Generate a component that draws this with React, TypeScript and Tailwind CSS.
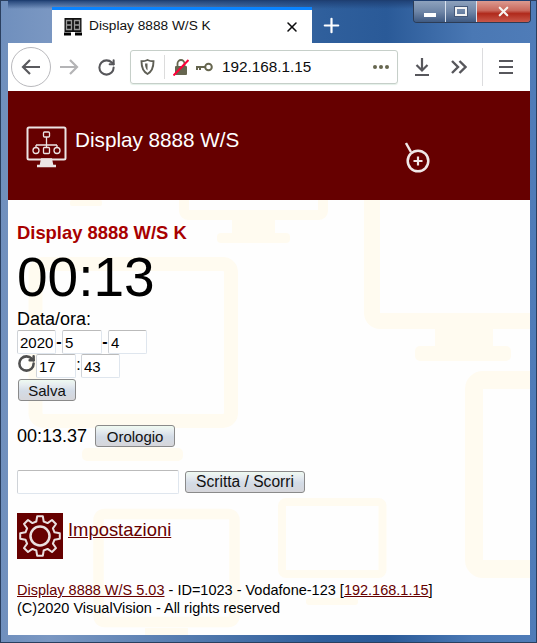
import { Plus, RotateCw, X } from "lucide-react";

const font = "font-['Liberation_Sans',Arial,sans-serif]";

function gearPath() {
  const teeth = 8;
  const c = 23;
  const pts: string[] = [];
  for (let i = 0; i < teeth; i++) {
    const a = (i * Math.PI * 2) / teeth - Math.PI / 2;
    const step = (Math.PI * 2) / teeth;
    const list: [number, number][] = [
      [15, a - step * 0.32],
      [20, a - step * 0.18],
      [20, a + step * 0.18],
      [15, a + step * 0.32],
    ];
    for (const [r, t] of list) {
      pts.push(`${(c + r * Math.cos(t)).toFixed(1)} ${(c + r * Math.sin(t)).toFixed(1)}`);
    }
  }
  return `M${pts.join(" L")} Z`;
}

function Watermark() {
  const c = "#fffbf0";
  return (
    <svg className="absolute left-0 top-0" width="522" height="436" viewBox="8 200 522 436" fill="none">
      <rect x="70" y="200" width="32" height="6" rx="2" fill={c} />
      {/* monitor under the header, left */}
      <rect x="184" y="180" width="139" height="35" rx="4" stroke={c} strokeWidth="10" />
      <rect x="232" y="220" width="43" height="14" fill={c} />
      <rect x="217" y="233" width="73" height="10" rx="4" fill={c} />
      {/* big monitor behind the form */}
      <rect x="35.500" y="264" width="195.500" height="157" rx="8" stroke={c} strokeWidth="14" />
      <rect x="115" y="428" width="45" height="22" fill={c} />
      <rect x="82" y="448" width="101" height="13" rx="5" fill={c} />
      {/* monitor right, top */}
      <rect x="372" y="150" width="190" height="171" rx="8" stroke={c} strokeWidth="16" />
      <rect x="435" y="329" width="58" height="18" fill={c} />
      <rect x="415" y="346" width="96" height="15" rx="5" fill={c} />
      {/* monitor right, bottom */}
      <rect x="474" y="380" width="100" height="189" rx="9" stroke={c} strokeWidth="18" />
      {/* small monitors at the bottom */}
      <rect x="282" y="502" width="100.500" height="72" rx="4" stroke={c} strokeWidth="8" />
      <rect x="306" y="598" width="52" height="7" rx="3" fill={c} />
      <rect x="98.500" y="514" width="136" height="108" rx="6" stroke={c} strokeWidth="10.500" />
      <rect x="145" y="628" width="43" height="8" fill={c} />
    </svg>
  );
}

function Favicon() {
  const digit = (x: number) => (
    <path d={`M${x} 2.500h5v9h-5zM${x} 7h5`} fill="none" stroke="#9a9a9a" strokeWidth="1.300" />
  );
  return (
    <svg width="18" height="18" viewBox="0 0 18 18">
      <rect x="0.500" y="0" width="17" height="14" fill="#111" />
      {digit(2.500)}
      {digit(10.500)}
      <rect x="0" y="14.500" width="7" height="3" fill="#000" />
      <rect x="11" y="14.500" width="7" height="3" fill="#000" />
    </svg>
  );
}

function TabStrip() {
  return (
    <div className="-mr-[1px] flex h-[43px] bg-[linear-gradient(180deg,#1e3f73,#2f5a9400_9px)] pl-[44px]">
      <div className="mt-[7px] flex h-[36px] w-[260px] items-center border-t-[3px] border-[#0a84ff] bg-white pl-[12px] pr-[12px]">
        <Favicon />
        <span className="ml-[7px] text-[13.700px] text-[#111]">Display 8888 W/S K</span>
        <X className="ml-auto" size={16} strokeWidth={2.300} color="#0c0c0d" />
      </div>
      <Plus className="ml-[8px] mt-[14px]" size={23} strokeWidth={2.300} color="#fff" />
      <div className="ml-auto mt-[1px] flex h-[22px] w-[118px] overflow-hidden rounded-b-[4px] border border-t-0 border-[#2c3c55]">
        <div className="flex w-[32px] items-end justify-center border-r border-[#d9e2ee] bg-[linear-gradient(#8ea2bd,#6f86a7_50%,#3f5a82)] pb-[5px]">
          <div className="h-[4px] w-[12px] bg-white" />
        </div>
        <div className="flex w-[31px] items-center justify-center border-r border-[#d9e2ee] bg-[linear-gradient(#8ea2bd,#6f86a7_50%,#3f5a82)]">
          <div className="h-[9px] w-[12px] border-[2px] border-[#f2f2f2] outline outline-1 outline-[#45597a]" />
        </div>
        <div className="flex flex-1 items-center justify-center bg-[linear-gradient(#dc9a90,#c9685c_45%,#b02a1c_60%,#c8584a)]">
          <X size={15} strokeWidth={3.500} color="#f7f4f0" />
        </div>
      </div>
    </div>
  );
}

function Toolbar() {
  return (
    <div className="flex h-[48px] items-center bg-white pl-[3px] text-[#57575c]">
      <div className="flex h-[40px] w-[40px] items-center justify-center rounded-full border border-[#b9b9bd]">
        <svg width="20" height="18" viewBox="0 0 20 18" fill="none" stroke="#5a5a5e" strokeWidth="2.200">
          <path d="M19 9H2M9 2 2 9l7 7" />
        </svg>
      </div>
      <svg className="ml-[8px]" width="20" height="18" viewBox="0 0 20 18" fill="none" stroke="#b4b4b6" strokeWidth="2.200">
        <path d="M1 9h17M11 2l7 7-7 7" />
      </svg>
      <RotateCw className="ml-[18px]" size={19} strokeWidth={2.600} color="#56565a" />
      <div className="ml-[14px] flex h-[34px] w-[268px] items-center rounded-[3px] border border-[#c6cfc9] pl-[9px] pr-[8px] shadow-[0_1px_1px_#e3f0e8]">
        <svg width="15" height="16" viewBox="0 0 15 16" fill="none">
          <path d="M7.500 1C5.500 2 3 2.300 1.500 2.300c0 5.500 1 10 6 12.700 5-2.700 6-7.200 6-12.700C12 2.300 9.500 2 7.500 1Z" stroke="#5f5f55" strokeWidth="1.900" />
          <path d="M5 4.500h2.500v7C5.800 10 5 7.500 5 4.500Z" fill="#5f5f55" />
        </svg>
        <div className="ml-[9px] h-[24px] w-px bg-[#dcdcdc]" />
        <svg className="ml-[8px]" width="16" height="18" viewBox="0 0 16 18" fill="none">
          <path d="M4.500 8V5.500a3.500 3.500 0 0 1 7 0V8" stroke="#66664f" strokeWidth="1.800" />
          <rect x="2" y="8" width="12" height="9" rx="1" fill="#66664f" />
          <path d="M0.500 17.500 15.500 2" stroke="#ff0039" strokeWidth="2" />
        </svg>
        <svg className="ml-[6px]" width="18" height="10" viewBox="0 0 18 10" fill="none">
          <circle cx="13.500" cy="5" r="3.300" stroke="#66664f" strokeWidth="2" />
          <path d="M10 5H1M2 5v3M5 5v3" stroke="#66664f" strokeWidth="2" />
        </svg>
        <span className="ml-[9px] text-[15.300px] text-[#0c0c0d]">192.168.1.15</span>
        <div className="ml-auto flex gap-[2px]">
          <div className="h-[4px] w-[4px] rounded-full bg-[#66664f]" />
          <div className="h-[4px] w-[4px] rounded-full bg-[#66664f]" />
          <div className="h-[4px] w-[4px] rounded-full bg-[#66664f]" />
        </div>
      </div>
      <svg className="ml-[16px]" width="16" height="18" viewBox="0 0 16 18" fill="none" stroke="#57575c" strokeWidth="2.200">
        <path d="M8 0v12M2.500 7 8 12.500 13.500 7M1 17h14" />
      </svg>
      <svg className="ml-[21px]" width="16" height="14" viewBox="0 0 16 14" fill="none" stroke="#57575c" strokeWidth="2.400">
        <path d="M1 1l6 6-6 6M8.500 1l6 6-6 6" />
      </svg>
      <div className="ml-[15px] h-[38px] w-px bg-[#dcdcde]" />
      <div className="ml-[16px] flex flex-col gap-[4px]">
        <div className="h-[2px] w-[14px] bg-[#57575c]" />
        <div className="h-[2px] w-[14px] bg-[#57575c]" />
        <div className="h-[2px] w-[14px] bg-[#57575c]" />
      </div>
    </div>
  );
}

function Header() {
  return (
    <div className="flex h-[109px] bg-[#660000] pl-[18px]">
      <svg className="mt-[35px]" width="42" height="42" viewBox="0 0 42 42" fill="none" stroke="#ece4e4">
        <rect x="1.500" y="1.500" width="38" height="32" rx="1.500" strokeWidth="2" />
        <path d="M16 33.500h9l1 5h-11zM11 40h19" strokeWidth="2.400" fill="#ece4e4" />
        <rect x="17.500" y="6" width="6" height="5" rx="1" strokeWidth="1.300" />
        <path d="M20.500 11v8M10 19v3M20.500 19v3M31 19v3M10 19h21" strokeWidth="1.300" />
        <circle cx="10" cy="24.500" r="3" strokeWidth="1.300" />
        <rect x="17.500" y="21.500" width="6" height="6" rx="1" strokeWidth="1.300" />
        <circle cx="31" cy="24.500" r="3" strokeWidth="1.300" />
      </svg>
      <div className="ml-[7px] mt-[37px] text-[20.700px] leading-[24px] text-white">Display 8888 W/S</div>
      <svg className="ml-[166px] mt-[50px]" width="26" height="34" viewBox="0 0 26 34" fill="none" stroke="#f0e8e8">
        <path d="M1 2l5 9" strokeWidth="2.400" />
        <circle cx="13" cy="20" r="10.300" strokeWidth="2.500" />
        <path d="M8.500 20h9M13 15.500v9" strokeWidth="2.200" />
      </svg>
    </div>
  );
}

const inputClass =
  "rounded-[2px] border border-[#dfe6ee] border-t-[#bbbbbb] border-l-[#cfd3d8] bg-white px-[2px] text-[15px] text-black outline-none";
const buttonClass =
  "rounded-[3px] border border-[#8a8a8a] bg-[linear-gradient(#effaf1,#e6ecf0_25%,#d3dbe6_55%,#d6d6da)] leading-none text-[#111]";

function Body() {
  return (
    <div className="relative flex-1 overflow-hidden bg-[#fefefe] pl-[9px] text-black">
      <Watermark />
      <div className="relative">
        <div className="mt-[22px] text-[18.400px] font-bold leading-[22px] text-[#a80000]">Display 8888 W/S K</div>
        <div className="mt-[2px] text-[55px] leading-[62px]">00:13</div>
        <div className="mt-[2px] text-[18px] leading-[18px]">Data/ora:</div>
        <div className="mt-[2px] flex h-[24px] items-center text-[16px]">
          <input className={`${inputClass} h-[24px] w-[39px]`} defaultValue="2020" />
          <span className="w-[6px] text-center font-bold">-</span>
          <input className={`${inputClass} h-[24px] w-[40px]`} defaultValue="5" />
          <span className="w-[6px] text-center font-bold">-</span>
          <input className={`${inputClass} h-[24px] w-[39px]`} defaultValue="4" />
        </div>
        <div className="flex h-[24px] text-[16px]">
          <RotateCw size={19} strokeWidth={3.200} color="#4f4f4f" />
          <input className={`${inputClass} h-[24px] w-[40px]`} defaultValue="17" />
          <span className="w-[5px] text-center leading-[22px]">:</span>
          <input className={`${inputClass} h-[24px] w-[39px]`} defaultValue="43" />
        </div>
        <button className={`${buttonClass} ml-[1px] mt-[1px] block h-[22px] w-[58px] text-[15px]`}>Salva</button>
        <div className="mt-[24px] flex h-[22px] items-center">
          <span className="text-[18px]">00:13.37</span>
          <button className={`${buttonClass} ml-[8px] h-[22px] w-[80px] text-[15px]`}>Orologio</button>
        </div>
        <div className="mt-[23px] flex h-[24px] items-center">
          <input className={`${inputClass} h-[24px] w-[162px]`} />
          <button className={`${buttonClass} ml-[6px] h-[22px] w-[120px] text-[15.600px]`}>Scritta / Scorri</button>
        </div>
        <div className="mt-[19px] flex">
          <div className="h-[46px] w-[46px] bg-[#660000]">
            <svg width="46" height="46" viewBox="0 0 46 46" fill="none" stroke="#eadfdf" strokeWidth="2">
              <path d={gearPath()} strokeLinejoin="round" />
              <circle cx="23" cy="23" r="9.500" strokeWidth="2.500" />
            </svg>
          </div>
          <a href="#" className="ml-[5px] mt-[7px] text-[18.400px] leading-[20px] text-[#660000] underline">Impostazioni</a>
        </div>
        <div className="mt-[22px] text-[14.500px] leading-[18px]">
          <a href="#" className="text-[#660000] underline">Display 8888 W/S 5.03</a>
          {" - ID=1023 - Vodafone-123 ["}
          <a href="#" className="text-[#660000] underline">192.168.1.15</a>
          {"]"}
          <br />
          (C)2020 VisualVision - All rights reserved
        </div>
      </div>
    </div>
  );
}

export default function App() {
  return (
    <div className={`${font} flex h-[643px] w-[537px] flex-col overflow-hidden bg-[linear-gradient(90deg,#6f8fbd,#7a97c2_9%,#2f5f9c_60%,#2a5a98_72%,#4a78b4_88%,#4f7cb8)] pb-[8px] pl-[8px] pr-[7px] shadow-[inset_0_0_0_1px_#2a3f5f]`}>
      <TabStrip />
      <Toolbar />
      <Header />
      <Body />
    </div>
  );
}
